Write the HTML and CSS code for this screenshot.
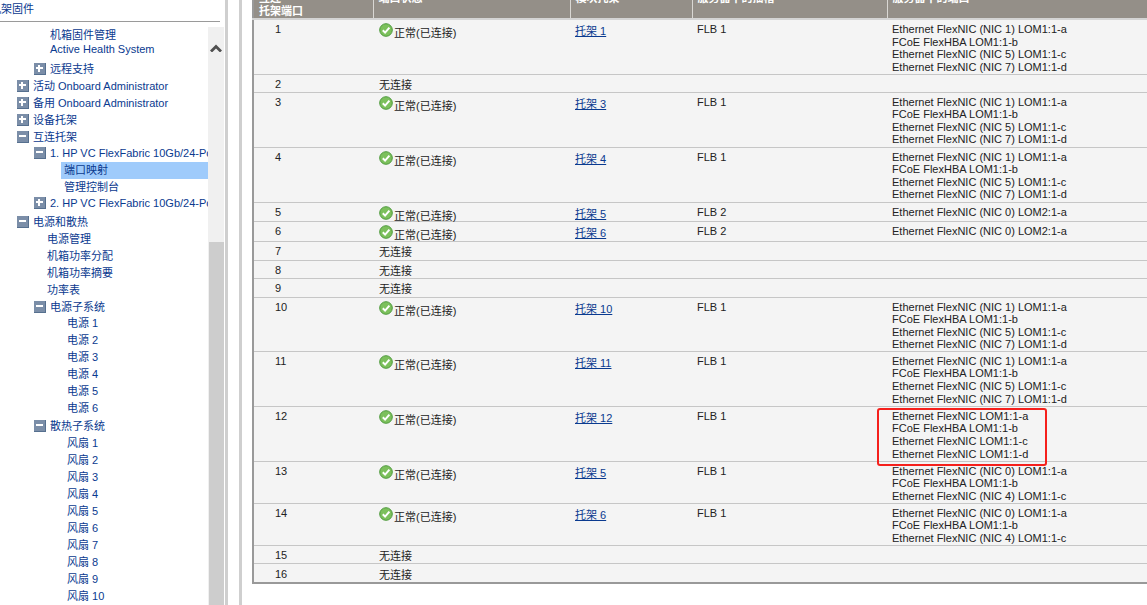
FILE: index.html
```html
<!DOCTYPE html>
<html lang="zh">
<head>
<meta charset="utf-8">
<title>端口映射</title>
<link rel="stylesheet" href="styles.css">
</head>
<body>
<div class="app">
  <nav class="side">
    <div class="side-title"><span class="side-title-text">机架固件</span></div>
    <div class="side-body">
      <ul class="tree">
        <li class="t l3 h15 low">机箱固件管理</li>
        <li class="t l3 h15">Active Health System</li>
        <li class="t l2 gap4"><i class="box plus"></i>远程支持</li>
        <li class="t l1"><i class="box plus"></i>活动 Onboard Administrator</li>
        <li class="t l1"><i class="box plus"></i>备用 Onboard Administrator</li>
        <li class="t l1"><i class="box plus"></i>设备托架</li>
        <li class="t l1"><i class="box minus"></i>互连托架</li>
        <li class="t l2 tight"><i class="box minus"></i>1. HP VC FlexFabric 10Gb/24-Port Module</li>
        <li class="t l4 sel">端口映射</li>
        <li class="t l4">管理控制台</li>
        <li class="t l2 tight"><i class="box plus"></i>2. HP VC FlexFabric 10Gb/24-Port Module</li>
        <li class="t l1 gap2"><i class="box minus"></i>电源和散热</li>
        <li class="t l5">电源管理</li>
        <li class="t l5">机箱功率分配</li>
        <li class="t l5">机箱功率摘要</li>
        <li class="t l5">功率表</li>
        <li class="t l2"><i class="box minus"></i>电源子系统</li>
        <li class="t l6 tight">电源 1</li>
        <li class="t l6">电源 2</li>
        <li class="t l6">电源 3</li>
        <li class="t l6">电源 4</li>
        <li class="t l6">电源 5</li>
        <li class="t l6">电源 6</li>
        <li class="t l2 gap1"><i class="box minus"></i>散热子系统</li>
        <li class="t l6">风扇 1</li>
        <li class="t l6">风扇 2</li>
        <li class="t l6">风扇 3</li>
        <li class="t l6">风扇 4</li>
        <li class="t l6">风扇 5</li>
        <li class="t l6">风扇 6</li>
        <li class="t l6">风扇 7</li>
        <li class="t l6">风扇 8</li>
        <li class="t l6">风扇 9</li>
        <li class="t l6">风扇 10</li>
      </ul>
      <div class="scrollbar">
        <svg class="arrow" width="12" height="8" viewBox="0 0 12 8"><path d="M1 7.5 L6 2.5 L11 7.5" fill="none" stroke="#505050" stroke-width="2.8"/></svg>
        <div class="thumb"></div>
      </div>
    </div>
  </nav>
  <div class="dividers"><span class="bar"></span><span class="fill"></span><span class="bar"></span></div>
  <main class="main">
    <svg width="0" height="0" class="defs"><defs>
      <symbol id="ok" viewBox="0 0 14 14">
        <circle cx="7" cy="7" r="6.3" fill="#7cc05c" stroke="#4f9a3e" stroke-width="1"/>
        <path d="M3.8 7.2 L6.1 9.6 L10.4 4.6" fill="none" stroke="#fff" stroke-width="2"/>
      </symbol>
    </defs></svg>
    <table class="ports">
      <thead>
        <tr><th class="c1">互连<br>托架端口</th><th class="c2">端口状态</th><th class="c3">模块托架</th><th class="c4">服务器中的插槽</th><th class="c5">服务器中的端口</th></tr>
      </thead>
      <tbody>
        <tr class="r55"><td class="n">1</td><td class="s"><svg class="ok"><use href="#ok"/></svg><span class="st">正常(已连接)</span></td><td class="bay"><a href="#">托架 1</a></td><td>FLB 1</td><td>Ethernet FlexNIC (NIC 1) LOM1:1-a<br>FCoE FlexHBA LOM1:1-b<br>Ethernet FlexNIC (NIC 5) LOM1:1-c<br>Ethernet FlexNIC (NIC 7) LOM1:1-d</td></tr>
        <tr class="r18"><td class="n">2</td><td class="nc">无连接</td><td></td><td></td><td></td></tr>
        <tr class="r55"><td class="n">3</td><td class="s"><svg class="ok"><use href="#ok"/></svg><span class="st">正常(已连接)</span></td><td class="bay"><a href="#">托架 3</a></td><td>FLB 1</td><td>Ethernet FlexNIC (NIC 1) LOM1:1-a<br>FCoE FlexHBA LOM1:1-b<br>Ethernet FlexNIC (NIC 5) LOM1:1-c<br>Ethernet FlexNIC (NIC 7) LOM1:1-d</td></tr>
        <tr class="r55"><td class="n">4</td><td class="s"><svg class="ok"><use href="#ok"/></svg><span class="st">正常(已连接)</span></td><td class="bay"><a href="#">托架 4</a></td><td>FLB 1</td><td>Ethernet FlexNIC (NIC 1) LOM1:1-a<br>FCoE FlexHBA LOM1:1-b<br>Ethernet FlexNIC (NIC 5) LOM1:1-c<br>Ethernet FlexNIC (NIC 7) LOM1:1-d</td></tr>
        <tr class="r19"><td class="n">5</td><td class="s"><svg class="ok"><use href="#ok"/></svg><span class="st">正常(已连接)</span></td><td class="bay"><a href="#">托架 5</a></td><td>FLB 2</td><td>Ethernet FlexNIC (NIC 0) LOM2:1-a</td></tr>
        <tr class="r20"><td class="n">6</td><td class="s"><svg class="ok"><use href="#ok"/></svg><span class="st">正常(已连接)</span></td><td class="bay"><a href="#">托架 6</a></td><td>FLB 2</td><td>Ethernet FlexNIC (NIC 0) LOM2:1-a</td></tr>
        <tr class="r19"><td class="n">7</td><td class="nc">无连接</td><td></td><td></td><td></td></tr>
        <tr class="r18"><td class="n">8</td><td class="nc">无连接</td><td></td><td></td><td></td></tr>
        <tr class="r19"><td class="n">9</td><td class="nc">无连接</td><td></td><td></td><td></td></tr>
        <tr class="r54"><td class="n">10</td><td class="s"><svg class="ok"><use href="#ok"/></svg><span class="st">正常(已连接)</span></td><td class="bay"><a href="#">托架 10</a></td><td>FLB 1</td><td>Ethernet FlexNIC (NIC 1) LOM1:1-a<br>FCoE FlexHBA LOM1:1-b<br>Ethernet FlexNIC (NIC 5) LOM1:1-c<br>Ethernet FlexNIC (NIC 7) LOM1:1-d</td></tr>
        <tr class="r55"><td class="n">11</td><td class="s"><svg class="ok"><use href="#ok"/></svg><span class="st">正常(已连接)</span></td><td class="bay"><a href="#">托架 11</a></td><td>FLB 1</td><td>Ethernet FlexNIC (NIC 1) LOM1:1-a<br>FCoE FlexHBA LOM1:1-b<br>Ethernet FlexNIC (NIC 5) LOM1:1-c<br>Ethernet FlexNIC (NIC 7) LOM1:1-d</td></tr>
        <tr class="r55"><td class="n">12</td><td class="s"><svg class="ok"><use href="#ok"/></svg><span class="st">正常(已连接)</span></td><td class="bay"><a href="#">托架 12</a></td><td>FLB 1</td><td>Ethernet FlexNIC LOM1:1-a<br>FCoE FlexHBA LOM1:1-b<br>Ethernet FlexNIC LOM1:1-c<br>Ethernet FlexNIC LOM1:1-d</td></tr>
        <tr class="r42"><td class="n">13</td><td class="s"><svg class="ok"><use href="#ok"/></svg><span class="st">正常(已连接)</span></td><td class="bay"><a href="#">托架 5</a></td><td>FLB 1</td><td>Ethernet FlexNIC (NIC 0) LOM1:1-a<br>FCoE FlexHBA LOM1:1-b<br>Ethernet FlexNIC (NIC 4) LOM1:1-c</td></tr>
        <tr class="r42"><td class="n">14</td><td class="s"><svg class="ok"><use href="#ok"/></svg><span class="st">正常(已连接)</span></td><td class="bay"><a href="#">托架 6</a></td><td>FLB 1</td><td>Ethernet FlexNIC (NIC 0) LOM1:1-a<br>FCoE FlexHBA LOM1:1-b<br>Ethernet FlexNIC (NIC 4) LOM1:1-c</td></tr>
        <tr class="r18"><td class="n">15</td><td class="nc">无连接</td><td></td><td></td><td></td></tr>
        <tr class="r20"><td class="n">16</td><td class="nc">无连接</td><td></td><td></td><td></td></tr>
      </tbody>
    </table>
    <div class="mark"></div>
  </main>
</div>
</body>
</html>
```
FILE: styles.css
```css
html, body { margin: 0; padding: 0; height: 100%; overflow: hidden; background: #fff; }
body { font: 11px/13px "Liberation Sans", "Noto Sans CJK SC", sans-serif; color: #222; }
.app { display: flex; height: 605px; overflow: hidden; }

.side { width: 225px; flex: none; display: flex; flex-direction: column; overflow: hidden; }
.side-title { height: 21px; margin-right: 5px; border-bottom: 1px solid #9a9a9a; overflow: hidden; color: #0a3a8f; font-size: 11px; line-height: 18px; white-space: nowrap; }
.side-title-text { display: block; margin-left: -10px; }
.side-body { flex: 1; display: flex; min-height: 0; padding-top: 5px; }
.tree { list-style: none; margin: 0; padding: 0; width: 208px; flex: none; overflow: hidden; white-space: nowrap; color: #0a3a8f; }
.t { height: 17px; line-height: 17px; display: flex; align-items: center; }
.h15 { height: 15px; line-height: 15px; }
.low { padding-top: 1px; margin-bottom: -1px; }
.gap4 { margin-top: 4px; }
.gap2 { margin-top: 2px; }
.gap1 { margin-top: 1px; }
.tight { margin-top: -1px; }
.l1 { padding-left: 17px; }
.l2 { padding-left: 34px; }
.l3 { padding-left: 50px; }
.l4 { padding-left: 64px; }
.l5 { padding-left: 47px; }
.l6 { padding-left: 67px; }
.sel { background: #9fcbfb; margin-left: 61px; padding-left: 3px; }
.box { flex: none; width: 12px; height: 12px; margin-right: 4px; background: #7b8ea8; border-right: 1px solid #56708f; border-bottom: 1px solid #56708f; box-sizing: border-box; position: relative; top: -1px; }
.box::before { content: ""; position: absolute; left: 2px; right: 2px; top: 4px; height: 2px; background: #fff; }
.plus::after { content: ""; position: absolute; top: 2px; bottom: 2px; left: 4px; width: 2px; background: #fff; }

.scrollbar { width: 16px; flex: none; background: #f0f0f0; display: flex; flex-direction: column; }
.arrow { margin: 17px 0 0 2px; flex: none; }
.thumb { margin-top: 190px; margin-left: 1px; flex: 1; background: #cdcdcd; }

.dividers { width: 27px; flex: none; display: flex; }
.bar { width: 3px; background: #cfcfcf; flex: none; }
.fill { width: 11px; flex: none; }

.main { flex: 1; min-width: 0; position: relative; overflow: hidden; }
.defs { position: absolute; }
.ports { border-collapse: collapse; table-layout: fixed; width: 895px; margin-top: -10px; border-bottom: 2px solid #999; border-left: 2px solid #999; color: #222; }
.ports th, .ports td { box-sizing: border-box; }
.ports th { background: #948f88; color: #fff; font-weight: bold; text-align: left; height: 29px; padding: 2px 5px 0 5px; vertical-align: top; border-left: 1px solid #d9d7d3; border-bottom: 2px solid #d4d4d4; overflow: hidden; white-space: nowrap; }
.ports th:first-child { border-left: 0; padding-left: 5px; }
.c1 { width: 120px; }
.c2 { width: 197px; }
.c3 { width: 122px; }
.c4 { width: 195px; }
.c5 { width: 261px; }
.ports td { background: #f4f4f4; vertical-align: top; padding: 3px 4px 0 5px; border-bottom: 1px solid #c6c6c6; line-height: 12.6px; }
.ports td.n { padding-left: 21px; }
.ports td.s { padding-left: 6px; }
.ports td.nc { padding: 5px 4px 0 6px; line-height: 10px; }
.ports td.bay { padding-top: 5px; }
.ports tr:last-child td.n { padding-top: 4px; }
.ports tr:last-child td.nc { padding-top: 6px; }
.r55 td { height: 55px; }
.r54 td { height: 54px; }
.r42 td { height: 42px; }
.r20 td { height: 20px; }
.r19 td { height: 19px; }
.r18 td { height: 18px; }
.ports a { color: #0a3a8f; text-decoration: underline; }
.ok { width: 14px; height: 14px; vertical-align: top; }
.st { display: inline-block; vertical-align: top; margin: 6px 0 0 1px; line-height: 9px; }
.mark { position: absolute; left: 625px; top: 408px; width: 170px; height: 58px; box-sizing: border-box; border: 2px solid #f5201c; border-radius: 3px; }
```
